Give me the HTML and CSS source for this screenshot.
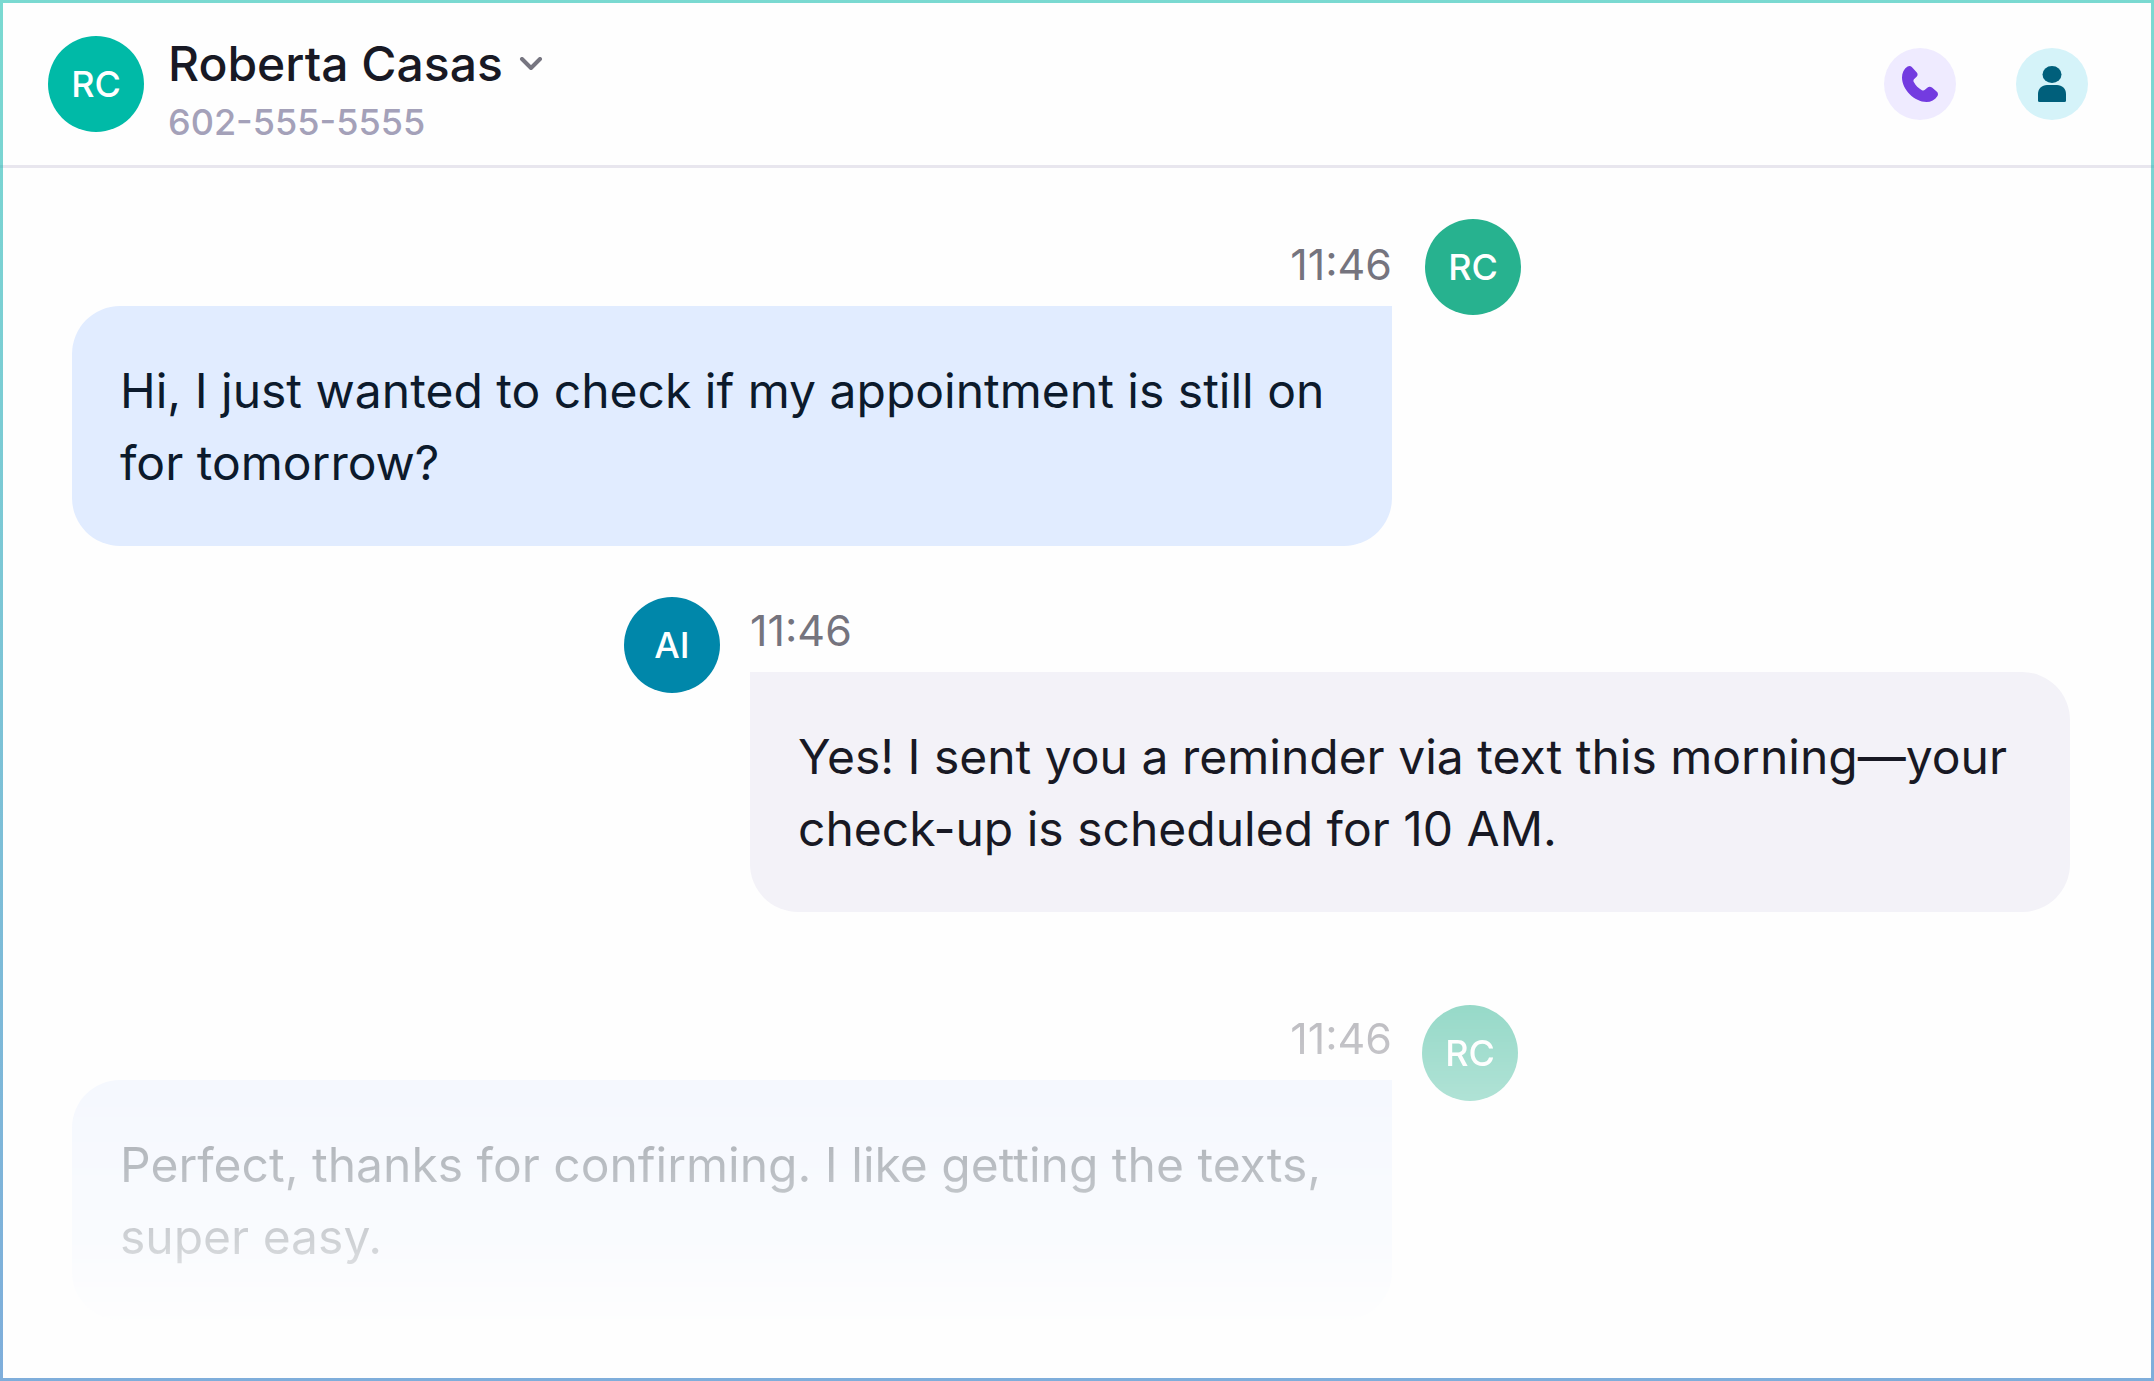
FILE: index.html
```html
<!DOCTYPE html>
<html lang="en">
<head>
    <meta charset="UTF-8">
    <meta name="viewport" content="width=device-width, initial-scale=1.0">
    <title>Roberta Casas</title>
    <link rel="stylesheet" href="styles.css">
</head>
<body>

<div class="chat">
    <header class="chat-header">
        <div class="avatar avatar-teal">RC</div>
        <div class="contact">
            <button type="button" class="contact-name">
                Roberta Casas
                <svg class="chevron" viewBox="0 0 24 15" aria-hidden="true">
                    <path d="M3 2 L12 11 L21 2"/>
                </svg>
            </button>
            <a class="contact-phone" href="tel:6025555555">602-555-5555</a>
        </div>
        <div class="actions">
            <button type="button" class="icon-btn call-btn" aria-label="Call">
                <svg viewBox="0 0 36 36" aria-hidden="true">
                    <path d="M5.6 .6C6.9-.3 8.6-.2 9.8 1L14.6 6.2C15.9 7.600 15.9 9.400 14.600 10.700L12.200 13.100C11.300 14 11.200 15 11.800 16.100C13.600 19.600 16.400 22.400 19.900 24.200C21 24.800 22 24.700 22.900 23.800L25.300 21.700C26.600 20.400 28.600 20.400 30 21.500L34.900 25.800C36.200 27 36.300 28.700 35.300 30.200C32.900 34 29 36 24.500 36C12.500 36 0 23.500 0 11.500C0 7 1.800 3 5.600 .6Z"/>
                </svg>
            </button>
            <button type="button" class="icon-btn profile-btn" aria-label="Profile">
                <svg viewBox="0 0 36 36" aria-hidden="true">
                    <ellipse cx="18" cy="8.500" rx="9.500" ry="8.500"/>
                    <path d="M4 28C4 22.500 8 19 13 19H23C28 19 32 22.500 32 28V34.500Q32 36 30.500 36H5.500Q4 36 4 34.500Z"/>
                </svg>
            </button>
        </div>
    </header>

    <main class="messages">
        <div class="message incoming first">
            <div class="message-body">
                <time>11:46</time>
                <p class="bubble">Hi, I just wanted to check if my appointment is still on for tomorrow?</p>
            </div>
            <div class="avatar avatar-green">RC</div>
        </div>

        <div class="message outgoing">
            <div class="avatar avatar-blue">AI</div>
            <div class="message-body">
                <time>11:46</time>
                <p class="bubble">Yes! I sent you a reminder via text this morning—your check-up is scheduled for 10 AM.</p>
            </div>
        </div>

        <div class="message incoming faded">
            <div class="message-body">
                <time>11:46</time>
                <p class="bubble">Perfect, thanks for confirming. I like getting the texts, super easy.</p>
            </div>
            <div class="avatar avatar-green">RC</div>
        </div>
    </main>
</div>

</body>
</html>
```
FILE: styles.css
```css
* {
    box-sizing: border-box;
}

body {
    margin: 0;
    font-family: Inter, "Liberation Sans", sans-serif;
    background-color: #fefefe;
    color: #181924;
}

button {
    font-family: inherit;
    border: none;
    padding: 0;
    cursor: pointer;
}

.chat {
    position: relative;
    min-height: 100vh;
}

/* gradient frame drawn over the header line */
.chat::after {
    content: "";
    position: absolute;
    inset: 0;
    border: 3px solid transparent;
    border-image: linear-gradient(rgba(0, 184, 168, 0.52), rgba(0, 94, 184, 0.5)) 3;
    pointer-events: none;
}

.chat-header {
    display: flex;
    align-items: flex-start;
    gap: 24px;
    padding: 36px 66px 13px 48px;
    border-bottom: 3px solid #e8e6ee;
}

.avatar {
    display: flex;
    align-items: center;
    justify-content: center;
    flex-shrink: 0;
    width: 96px;
    height: 96px;
    border-radius: 50%;
    color: #fff;
    font-size: 36px;
    font-weight: 500;
}

.avatar-teal {
    background-color: #00baa7;
}

.avatar-green {
    background-color: #27b28f;
}

.avatar-blue {
    background-color: #0087aa;
}

.contact {
    display: flex;
    flex-direction: column;
    align-items: flex-start;
}

.contact-name {
    display: flex;
    align-items: center;
    gap: 16px;
    background: none;
    color: #181924;
    font-size: 48px;
    font-weight: 500;
    line-height: 56px;
}

.chevron {
    width: 24px;
    height: 15px;
    fill: none;
    stroke: #767580;
    stroke-width: 4;
    stroke-linecap: round;
    stroke-linejoin: round;
}

.contact-phone {
    color: #a4a1b9;
    font-size: 36px;
    font-weight: 500;
    line-height: 60px;
    text-decoration: none;
}

.actions {
    display: flex;
    align-items: center;
    gap: 60px;
    height: 96px;
    margin-left: auto;
}

.icon-btn {
    display: flex;
    align-items: center;
    justify-content: center;
    width: 72px;
    height: 72px;
    border-radius: 50%;
}

.icon-btn svg {
    width: 36px;
    height: 36px;
    fill: currentColor;
}

.call-btn {
    background-color: #efebff;
    color: #733be0;
}

.profile-btn {
    background-color: #d5f3f9;
    color: #005f7b;
}

.messages {
    padding: 51px 84px 60px 72px;
}

.message {
    display: flex;
    align-items: flex-start;
    gap: 30px;
    margin-bottom: 51px;
}

.message-body {
    display: flex;
    flex-direction: column;
    width: 1320px;
    padding-top: 3px;
}

.first {
    gap: 33px;
}

.first .message-body {
    padding-top: 15px;
}

time {
    color: #75747e;
    font-size: 43px;
    line-height: 60px;
    margin-bottom: 12px;
}

.bubble {
    margin: 0;
    padding: 49px 48px 47px;
    border-radius: 48px;
    font-size: 48px;
    line-height: 72px;
}

.incoming time {
    text-align: right;
}

.incoming .bubble {
    background-color: #e1ecff;
    border-top-right-radius: 0;
    color: #0c1a2c;
}

.outgoing {
    justify-content: flex-end;
}

.outgoing .bubble {
    background-color: #f3f2f8;
    border-top-left-radius: 0;
}

.faded {
    margin-top: 93px;
    margin-bottom: 0;
    -webkit-mask-image: linear-gradient(rgba(0, 0, 0, 0.48), rgba(0, 0, 0, 0.19) 76%, rgba(0, 0, 0, 0.02));
    mask-image: linear-gradient(rgba(0, 0, 0, 0.48), rgba(0, 0, 0, 0.19) 76%, rgba(0, 0, 0, 0.02));
}

.faded .bubble {
    background-color: #e7efff;
}
```
